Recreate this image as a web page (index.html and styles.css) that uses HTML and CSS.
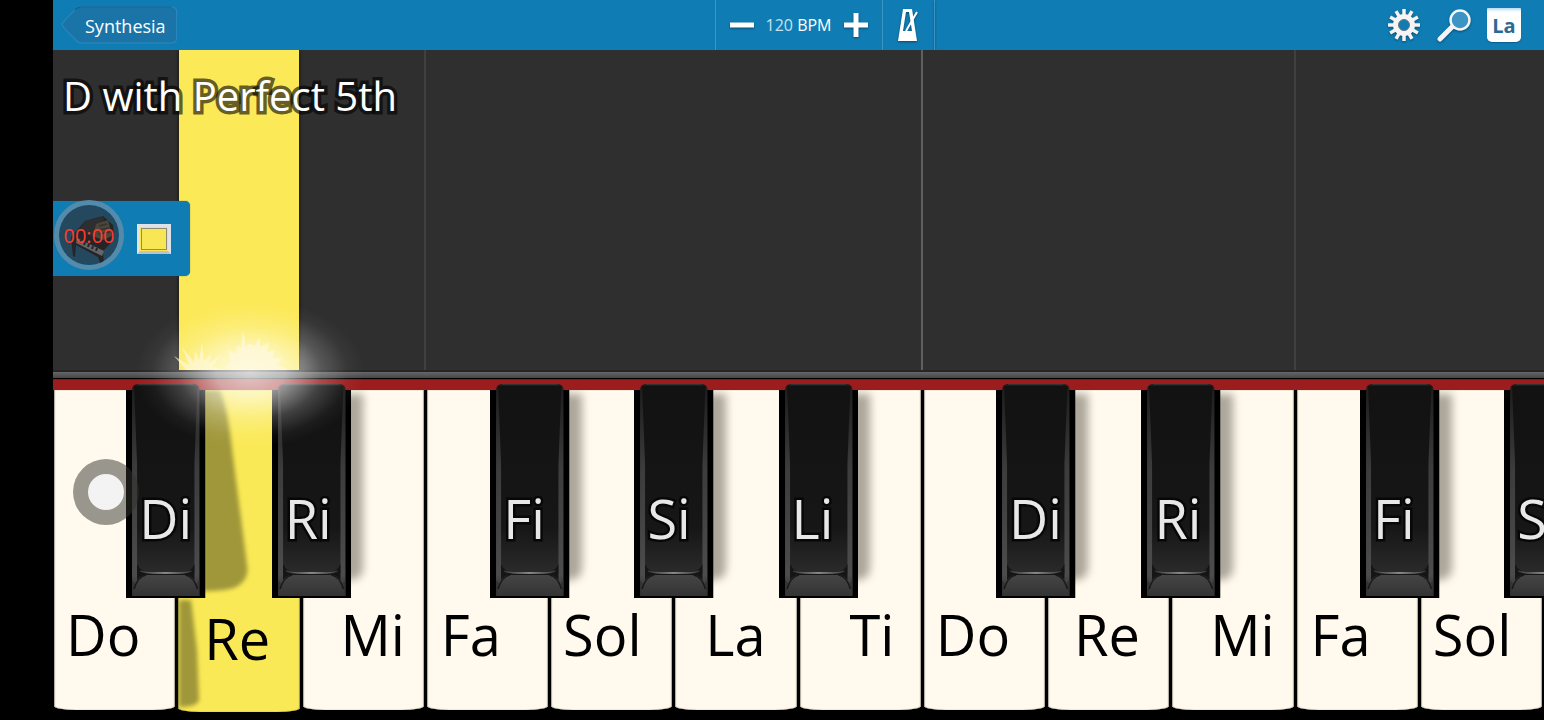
FILE: index.html
```html
<!DOCTYPE html>
<html lang="en">
<head>
    <meta charset="UTF-8">
    <meta name="viewport" content="width=device-width, initial-scale=1.0">
    <title>Synthesia</title>
    <link rel="stylesheet" href="styles.css">
</head>
<body>
    <!-- Shared drawing for the black keys -->
    <svg class="defs" aria-hidden="true">
        <defs>
            <linearGradient id="capTop" x1="0" y1="0" x2="0" y2="1">
                <stop offset="0" stop-color="#121212"/>
                <stop offset="0.75" stop-color="#161616"/>
                <stop offset="1" stop-color="#2b2b2b"/>
            </linearGradient>
            <linearGradient id="capSide" x1="0" y1="0" x2="0" y2="1">
                <stop offset="0" stop-color="#1c1c1c"/>
                <stop offset="0.4" stop-color="#3c3c3c"/>
                <stop offset="0.9" stop-color="#4c4c4c"/>
                <stop offset="1" stop-color="#2a2a2a"/>
            </linearGradient>
            <linearGradient id="capLip" x1="0" y1="0" x2="0" y2="1">
                <stop offset="0" stop-color="#454545"/>
                <stop offset="1" stop-color="#333"/>
            </linearGradient>
            <linearGradient id="capLine" x1="0" y1="0" x2="1" y2="0">
                <stop offset="0" stop-color="#333"/>
                <stop offset="0.5" stop-color="#aaa"/>
                <stop offset="1" stop-color="#333"/>
            </linearGradient>
            <symbol id="cap" viewBox="0 0 79 214" preserveAspectRatio="none">
                <path d="M0 6H79V214H0Z" fill="#000"/>
                <path d="M6 6Q6 0 12 0H67Q73 0 73 6V212H6Z" fill="url(#capSide)"/>
                <path d="M8 2H71L68 80V190H11V80Z" fill="url(#capTop)"/>
                <path d="M11 180Q14 188 26 189H54Q65 188 68 180V198H11Z" fill="#151515"/>
                <path d="M14 187Q20 189 26 189H54Q60 189 65 187" fill="none" stroke="url(#capLine)" stroke-width="1.500"/>
                <path d="M6 212Q9 191 20 191H59Q70 191 73 212Z" fill="url(#capLip)"/>
                <path d="M6 212V196L9 200ZM73 212V196L70 200Z" fill="#333"/>
                <path d="M8 205Q12 192 20 191M71 205Q67 192 59 191" fill="none" stroke="#191919" stroke-width="1.500"/>
                <path d="M12 0.500H67" stroke="#333"/>
            </symbol>
        </defs>
    </svg>

    <div class="app">
        <header class="toolbar">
            <button class="back">
                <svg class="back-shape" viewBox="0 0 118 37" preserveAspectRatio="none" aria-hidden="true">
                    <path d="M1 18Q1 16 14 4Q17 1 21 1H112Q117 1 117 6V31Q117 36 112 36H21Q17 36 14 32Q1 20 1 18Z" fill="#1a74a8" stroke="#2c89bd"/>
                    <path d="M14 4Q17 1 21 1H112" fill="none" stroke="#12608c"/>
                </svg>
                <span>Synthesia</span>
            </button>
            <div class="tempo">
                <button class="icon" aria-label="Slower">
                    <svg width="24" height="24" viewBox="0 0 24 24"><path d="M0 9.500H24V14.500H0Z" fill="#fff"/></svg>
                </button>
                <span class="bpm"><span class="bpm-value">120</span> BPM</span>
                <button class="icon" aria-label="Faster">
                    <svg width="24" height="24" viewBox="0 0 24 24"><path d="M0 9.500H9.500V0H14.500V9.500H24V14.500H14.500V24H9.500V14.500H0Z" fill="#fff"/></svg>
                </button>
            </div>
            <div class="tools">
                <button class="icon metronome" aria-label="Metronome">
                    <svg width="22" height="34" viewBox="0 0 22 34">
                        <path fill-rule="evenodd" d="M6 1H15L20 33H1ZM9 4L6 23H15L12 4Z" fill="#fff"/>
                        <path d="M9 23L20 4" stroke="#fff" stroke-width="2"/>
                    </svg>
                </button>
                <div class="actions">
                    <button class="icon" aria-label="Settings">
                        <svg width="34" height="34" viewBox="-17 -17 34 34">
                            <g stroke="#f4f4f4" stroke-width="3.500">
                                <path d="M0-16V16M-16 0H16"/>
                                <path d="M0-16V16M-16 0H16" transform="rotate(30)"/>
                                <path d="M0-16V16M-16 0H16" transform="rotate(60)"/>
                            </g>
                            <circle r="11" fill="#f4f4f4"/>
                            <circle r="5.500" fill="#107cb4" stroke="#68747b"/>
                        </svg>
                    </button>
                    <button class="icon" aria-label="Search">
                        <svg width="34" height="34" viewBox="0 0 34 34">
                            <path d="M3 31L15 19" stroke="#f4f4f4" stroke-width="5" stroke-linecap="round"/>
                            <circle cx="23" cy="12" r="9.500" fill="#3c94c5" stroke="#f4f4f4" stroke-width="2.500"/>
                        </svg>
                    </button>
                    <button class="labels-toggle" aria-label="Key labels: La">La</button>
                </div>
            </div>
        </header>

        <main class="stage">
            <div class="lanes">
                <div class="lane"></div>
                <div class="lane"><div class="note"></div></div>
                <div class="lane"></div>
                <div class="lane line"></div>
                <div class="lane"></div>
                <div class="lane"></div>
                <div class="lane"></div>
                <div class="lane line octave"></div>
                <div class="lane"></div>
                <div class="lane"></div>
                <div class="lane line"></div>
                <div class="lane"></div>
            </div>
            <h1 class="chord">D with Perfect 5th</h1>
            <div class="panel">
                <button class="recorder">
                    <svg viewBox="0 0 60 60" aria-hidden="true">
                        <circle cx="30" cy="30" r="30" fill="#24485e"/>
                        <path d="M12 32L20 23L26 16L44 11L54 20L55 32L50 40L44 46L45 60L42 60L39 52L17 40L16 52L14 51Z" fill="#252527"/>
                        <path d="M26 16L44 11L46 22L34 31L20 25Z" fill="#2d2e30"/>
                        <path d="M37 19L49 15L53 31L44 35L34 31Z" fill="#4a4639"/>
                        <path d="M40 21L48 19M39 25L50 23M39 29L51 27" stroke="#34332e" stroke-width="1.500"/>
                        <path d="M18 33L45 46L43 51L17 38Z" fill="#626569"/>
                        <path d="M22 35L21 38M26 37L25 40M30 39L29 42M34 41L33 44M38 43L37 46" stroke="#252527" stroke-width="2"/>
                    </svg>
                    <span>00:00</span>
                </button>
                <button class="swatch" aria-label="Note colour"></button>
            </div>
        </main>

        <div class="rail"></div>
        <div class="felt"></div>

        <section class="keyboard">
            <ul class="keys">
                <li class="do">
                    <button class="white">Do</button>
                    <button class="black wide"><svg><use href="#cap"/></svg><span>Di</span></button>
                </li>
                <li class="re pressed">
                    <button class="white">Re</button>
                    <svg class="shade" viewBox="0 0 124 320" preserveAspectRatio="none" aria-hidden="true">
                        <path d="M26 0H43Q51 20 55 60L70 176Q72 188 62 195Q55 201 26 201Z"/>
                        <path d="M2 210H14L20 260L22 310Q20 317 2 317Z"/>
                    </svg>
                    <button class="black"><svg><use href="#cap"/></svg><span>Ri</span></button>
                </li>
                <li class="mi"><button class="white">Mi</button></li>
                <li class="fa">
                    <button class="white">Fa</button>
                    <button class="black"><svg><use href="#cap"/></svg><span>Fi</span></button>
                </li>
                <li class="sol">
                    <button class="white">Sol</button>
                    <button class="black"><svg><use href="#cap"/></svg><span>Si</span></button>
                </li>
                <li class="la">
                    <button class="white">La</button>
                    <button class="black"><svg><use href="#cap"/></svg><span>Li</span></button>
                </li>
                <li class="ti"><button class="white">Ti</button></li>
                <li class="do">
                    <button class="white">Do</button>
                    <button class="black"><svg><use href="#cap"/></svg><span>Di</span></button>
                </li>
                <li class="re">
                    <button class="white">Re</button>
                    <button class="black"><svg><use href="#cap"/></svg><span>Ri</span></button>
                </li>
                <li class="mi"><button class="white">Mi</button></li>
                <li class="fa">
                    <button class="white">Fa</button>
                    <button class="black"><svg><use href="#cap"/></svg><span>Fi</span></button>
                </li>
                <li class="sol">
                    <button class="white">Sol</button>
                    <button class="black"><svg><use href="#cap"/></svg><span>Si</span></button>
                </li>
            </ul>

            <!-- Light where the note hits the key -->
            <div class="glow"></div>
            <svg class="sparks" width="140" height="40" viewBox="0 0 140 40" aria-hidden="true">
                <path d="M12 40L0 26L15 35L8 17L20 32L21 20L25 31L28 13L30 31L38 23L34 34L48 24L38 37L54 40L50 37L57 32L54 20L62 24L64 15L67 18L69 0L72 16L76 13L80 16L86 7L86 17L95 13L93 22L101 20L98 28L109 28L102 34L114 40Z"/>
            </svg>
            <div class="touch"></div>
        </section>
    </div>
</body>
</html>
```
FILE: styles.css
```css
* {
    box-sizing: border-box;
}

body {
    margin: 0;
    background-color: #000;
    font-family: "Open Sans", sans-serif;
}

button {
    border: none;
    padding: 0;
    background: none;
    font-family: inherit;
    cursor: pointer;
}

.defs {
    position: absolute;
    width: 0;
    height: 0;
}

.app {
    display: flex;
    flex-direction: column;
    height: 100vh;
    margin-left: 53px;
    overflow: hidden;
}

/* Toolbar */
.toolbar {
    display: grid;
    grid-template-columns: 1fr 168px 1fr;
    align-items: center;
    height: 50px;
    background-color: #107cb4;
    color: #fff;
}

.back {
    position: relative;
    justify-self: start;
    height: 38px;
    margin-left: 8px;
    padding: 2px 12px 0 24px;
    color: #fff;
    font-size: 18px;
}

.back-shape {
    position: absolute;
    top: 0;
    left: 0;
    width: 100%;
    height: 100%;
}

.back span {
    position: relative;
}

.tempo {
    display: flex;
    align-items: center;
    justify-content: space-between;
    height: 50px;
    padding: 0 14px;
    border-left: 1px solid #3c94c3;
    border-right: 1px solid #3c94c3;
}

.bpm {
    font-size: 16px;
}

.bpm-value {
    color: #c4e2f2;
}

.icon {
    display: flex;
    filter: drop-shadow(0 1px 1px #09496b);
}

.tools {
    display: flex;
    align-items: center;
    justify-content: space-between;
    padding-right: 23px;
}

.metronome {
    align-items: center;
    justify-content: center;
    width: 52px;
    height: 50px;
    border-right: 1px solid #3c94c3;
}

.actions {
    display: flex;
    align-items: center;
    gap: 16px;
}

.labels-toggle {
    width: 34px;
    height: 34px;
    border-radius: 1px 1px 5px 5px;
    background: linear-gradient(#b8dcee, #fff 4px);
    box-shadow: 0 1px 1px #0b5c88;
    color: #286b94;
    font-size: 20px;
    font-weight: bold;
}

/* Falling notes */
.stage {
    position: relative;
    flex: 32 1 0;
    background-color: #2f2f2f;
}

.lanes {
    display: grid;
    grid-template-columns: repeat(12, 1fr);
    height: 100%;
}

.line {
    border-left: 2px solid #404040;
    margin-left: -2px;
}

.octave {
    border-color: #606060;
}

.note {
    height: 100%;
    margin: 0 3px 0 2px;
    background-color: #fce957;
    box-shadow: 0 0 4px #151200;
    clip-path: inset(0 -4px);
}

.chord {
    position: absolute;
    top: 18px;
    left: 10px;
    margin: 0;
    color: #fff;
    font-size: 40px;
    font-weight: normal;
    -webkit-text-stroke: 7px rgba(0, 0, 0, 0.6);
    paint-order: stroke fill;
    stroke-linejoin: round;
}

.panel {
    position: absolute;
    top: 151px;
    left: 0;
    display: flex;
    align-items: center;
    gap: 13px;
    height: 75px;
    padding: 0 19px 0 1px;
    border-radius: 0 5px 5px 0;
    background-color: #107cb4;
    box-shadow: 0 0 1px #0a4e72;
}

.recorder {
    position: relative;
    width: 70px;
    height: 70px;
    margin-bottom: 8px;
    border: 5px solid #558baa;
    border-radius: 50%;
}

.recorder svg {
    display: block;
    border-radius: 50%;
}

.recorder span {
    position: absolute;
    top: 50%;
    left: 50%;
    transform: translate(-50%, -50%);
    color: #ff3b2f;
    font-size: 20px;
}

.swatch {
    width: 34px;
    height: 30px;
    border: 3px solid #dfe3e8;
    border-bottom-color: #bfc3c8;
    background-color: #f8e654;
    outline: 1px solid #8c8c70;
    outline-offset: -5px;
}

/* Keyboard */
.rail {
    height: 9px;
    border-top: 2px solid #252525;
    border-bottom: 1px solid #000;
    background: linear-gradient(#666, #464646);
}

.felt {
    height: 11px;
    border-top: 1px solid #4a3030;
    background-color: #9c1d1e;
}

.keyboard {
    position: relative;
    flex: 33 1 0;
}

.keys {
    display: grid;
    grid-template-columns: repeat(12, 1fr);
    height: 100%;
    margin: 0;
    padding: 0 0 10px;
    list-style: none;
}

.keys li {
    position: relative;
}

.white {
    display: flex;
    align-items: flex-end;
    width: calc(100% - 3px);
    height: 100%;
    margin-left: 1px;
    padding-bottom: 44px;
    border-radius: 0 0 22px 22px / 0 0 4px 4px;
    background-color: #fffaed;
    box-shadow: inset 1px 0 1px #aaa69a, inset -1px 0 1px #aaa69a;
    color: #000;
    font-size: 56px;
    line-height: 64px;
}

.pressed .white {
    height: calc(100% + 2px);
    padding-bottom: 42px;
    background-color: #fae956;
    box-shadow: inset 1px 0 1px #a39737, inset -1px 0 1px #a39737;
}

.do .white {
    padding-left: 12px;
}

.re .white {
    padding-left: 26px;
}

.mi .white {
    padding-left: 38px;
}

.fa .white {
    padding-left: 14px;
}

.sol .white {
    padding-left: 12px;
}

.la .white {
    padding-left: 30px;
}

.ti .white {
    padding-left: 50px;
}

.shade {
    position: absolute;
    top: 0;
    left: 0;
    width: 100%;
    height: 100%;
    fill: rgba(70, 70, 30, 0.5);
    filter: blur(2px);
    pointer-events: none;
}

.black {
    position: absolute;
    z-index: 1;
    top: -6px;
    width: 64%;
    height: calc(65% + 6px);
    color: #e8e8e8;
    font-size: 54px;
    line-height: 60px;
}

.black svg {
    position: absolute;
    z-index: 1;
    top: 0;
    left: 0;
    width: 100%;
    height: 100%;
}

.black span {
    position: absolute;
    z-index: 1;
    bottom: 50px;
    left: 13px;
    -webkit-text-stroke: 5px #070707;
    paint-order: stroke fill;
}

/* Shadow each black key throws to its right */
.black::after {
    content: "";
    position: absolute;
    top: 10px;
    bottom: 18px;
    left: 80%;
    width: 28px;
    border-radius: 0 0 12px 0;
    background-color: rgba(70, 65, 55, 0.45);
    filter: blur(4px);
}

.black.wide::after {
    display: none;
}

.do .black {
    left: 59%;
}

.re .black {
    left: 76%;
}

.fa .black {
    left: 52%;
}

.sol .black {
    left: 68%;
}

.la .black {
    left: 84%;
}

.glow {
    position: absolute;
    z-index: 2;
    top: -92px;
    left: 82px;
    width: 230px;
    height: 150px;
    background: radial-gradient(closest-side, rgba(255, 255, 255, 0.75), rgba(255, 255, 255, 0.6) 30%, rgba(255, 255, 255, 0.2) 62%, rgba(255, 255, 255, 0.04) 85%, transparent);
    pointer-events: none;
}

.sparks {
    position: absolute;
    z-index: 3;
    top: -60px;
    left: 121px;
    fill: #fffae6;
    opacity: 0.6;
    pointer-events: none;
}

.touch {
    position: absolute;
    z-index: 3;
    top: 69px;
    left: 20px;
    width: 66px;
    height: 66px;
    border: 15px solid rgba(50, 50, 45, 0.5);
    border-radius: 50%;
    background-color: #f3f3f3;
    background-clip: padding-box;
    pointer-events: none;
}
```
